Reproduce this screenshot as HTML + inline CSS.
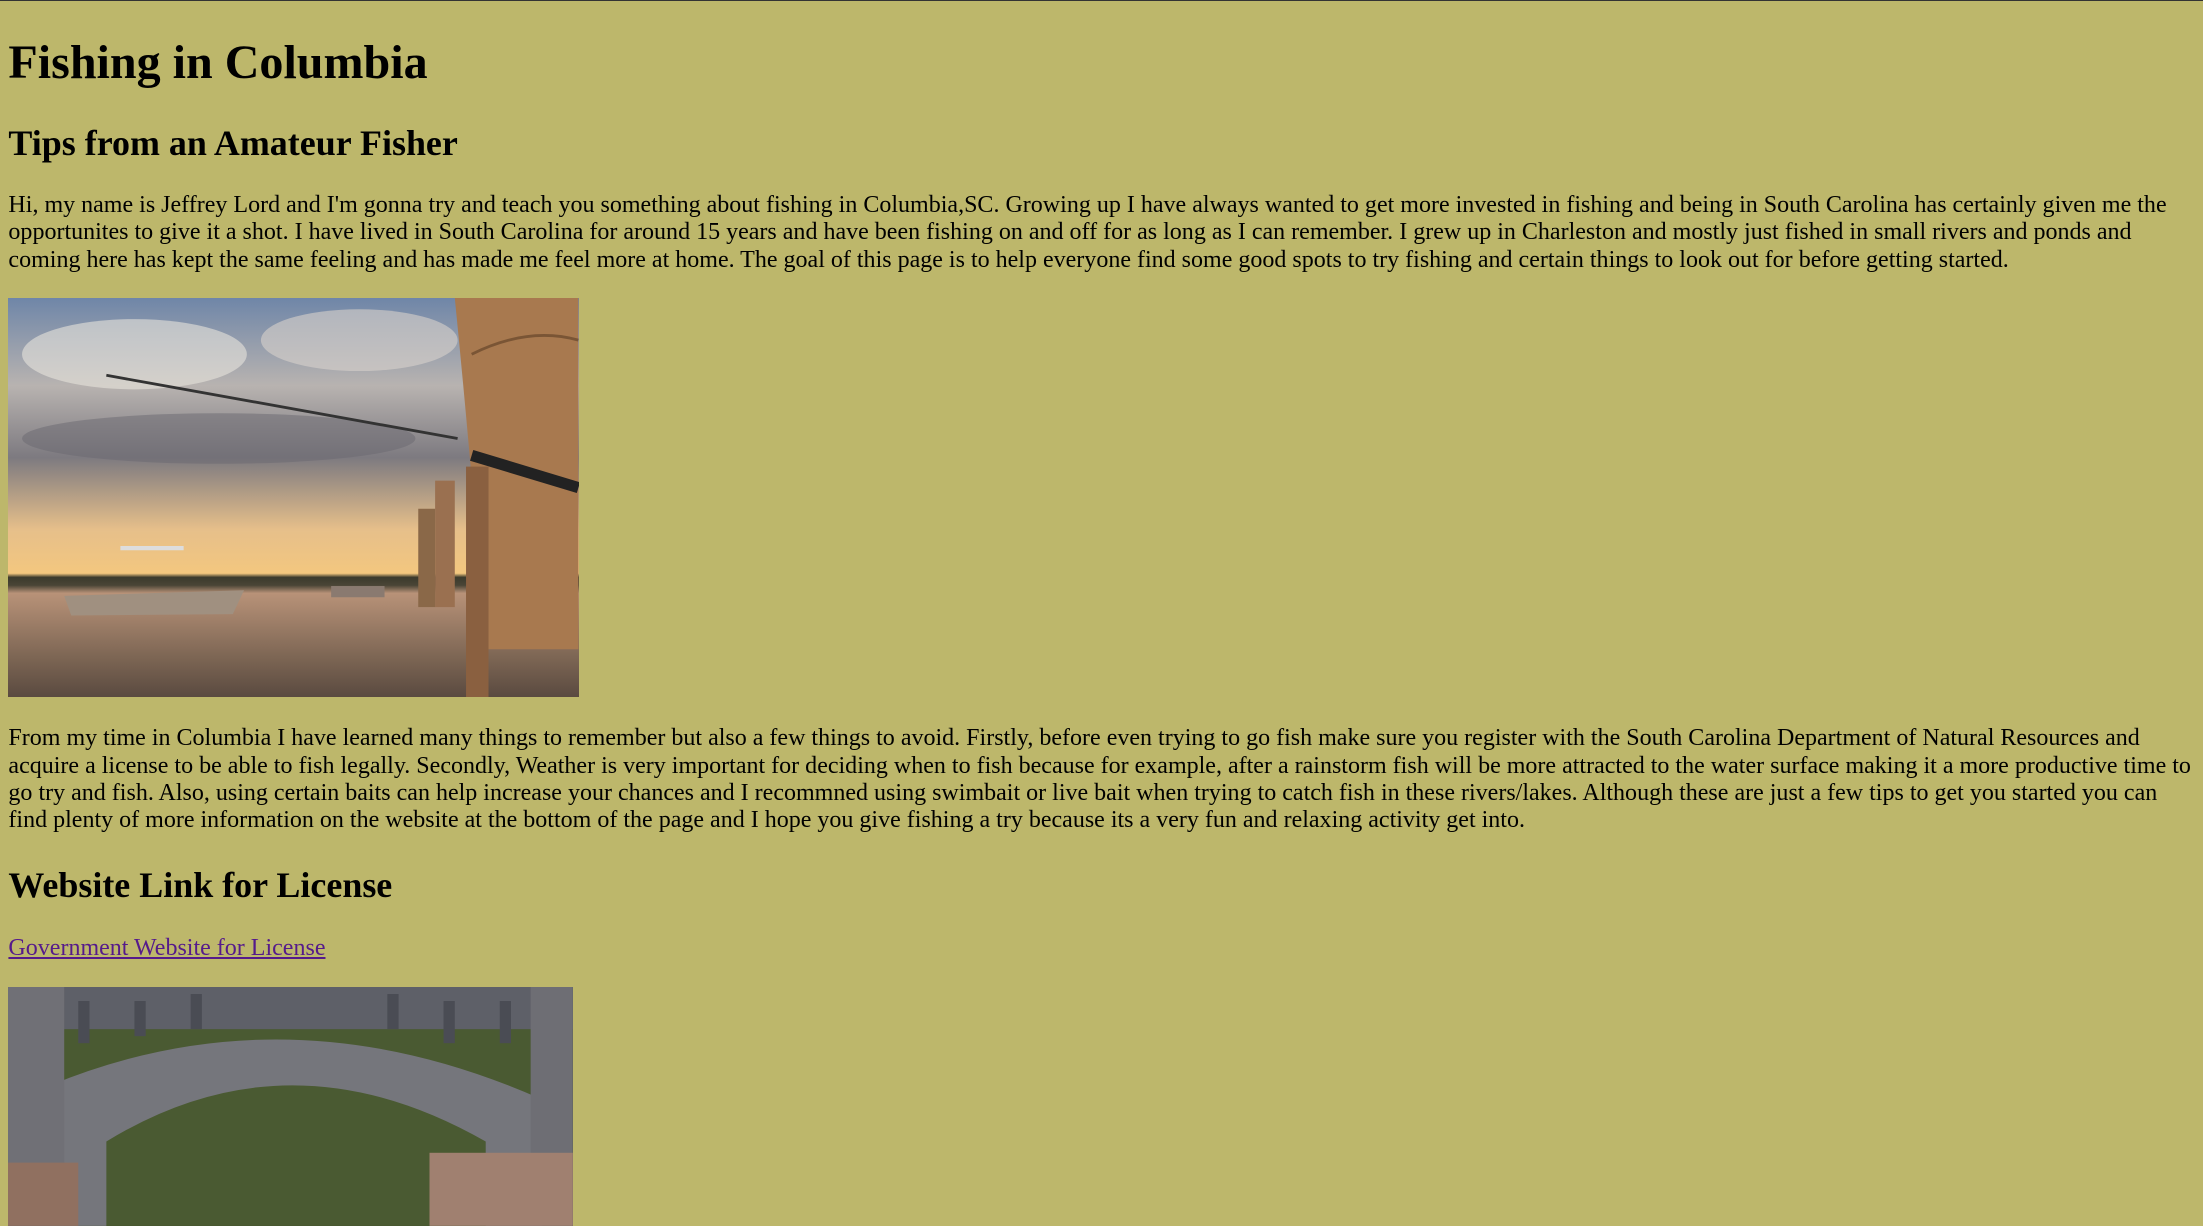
<!DOCTYPE html>
<html><head><meta charset="utf-8">
<style>
html{zoom:1.405;}
body{margin:0;background:#bdb76b;font-family:"Liberation Serif",serif;color:#000;border-top:1px solid #333;overflow:hidden;height:863px;}
.w{padding:0 6px 0 6px;}
h1{font-size:34.2px;line-height:39px;margin:25px 0 0;}
h2{font-size:25.6px;line-height:30px;margin:22px 0 0;}
p{font-size:17.1px;margin:20px 0 0;line-height:19.5px;}
a{color:#551a8b;}
.img1{width:406px;height:284px;margin-top:17px;position:relative;overflow:hidden;
background:linear-gradient(#6f86a8 0%,#b8b3b0 22%,#7d7a80 40%,#e6bf8a 58%,#f3c77f 69%,#3b3a2c 70%,#4a4536 72%,#b89278 74%,#7d6654 90%,#5a4a40 100%);}
.img2{width:402px;height:170px;margin-top:18px;position:relative;overflow:hidden;background:#3d4a2a;}
</style></head><body><div class="w">
<h1>Fishing in Columbia</h1>
<h2>Tips from an Amateur Fisher</h2>
<p>Hi, my name is Jeffrey Lord and I'm gonna try and teach you something about fishing in Columbia,SC. Growing up I have always wanted to get more invested in fishing and being in South Carolina has certainly given me the opportunites to give it a shot. I have lived in South Carolina for around 15 years and have been fishing on and off for as long as I can remember. I grew up in Charleston and mostly just fished in small rivers and ponds and coming here has kept the same feeling and has made me feel more at home. The goal of this page is to help everyone find some good spots to try fishing and certain things to look out for before getting started.</p>
<div class="img1">
<svg width="406" height="284" style="position:absolute;left:0;top:0">
<ellipse cx="90" cy="40" rx="80" ry="25" fill="#e8e4dc" opacity=".6"/>
<ellipse cx="250" cy="30" rx="70" ry="22" fill="#d8d2cc" opacity=".6"/>
<ellipse cx="150" cy="100" rx="140" ry="18" fill="#6a6870" opacity=".5"/>
<path d="M318 0 L406 0 L406 250 L340 250 Q330 120 318 0Z" fill="#a8794f"/>
<path d="M330 40 Q370 20 406 30" stroke="#7a5535" stroke-width="2" fill="none"/>
<rect x="326" y="120" width="16" height="220" fill="#8a6040"/>
<rect x="304" y="130" width="14" height="90" fill="#9a7050"/>
<rect x="292" y="150" width="12" height="70" fill="#8a6848"/>
<line x1="70" y1="55" x2="320" y2="100" stroke="#333" stroke-width="2"/>
<line x1="330" y1="112" x2="406" y2="135" stroke="#222" stroke-width="8"/>
<path d="M40 212 L168 208 L160 225 L45 226 Z" fill="#a09080"/>
<path d="M80 178 L125 178" stroke="#ddd" stroke-width="3"/>
<rect x="230" y="205" width="38" height="8" fill="#8a7a70"/>
</svg></div>
<p style="margin-top:20px">From my time in Columbia I have learned many things to remember but also a few things to avoid. Firstly, before even trying to go fish make sure you register with the South Carolina Department of Natural Resources and acquire a license to be able to fish legally. Secondly, Weather is very important for deciding when to fish because for example, after a rainstorm fish will be more attracted to the water surface making it a more productive time to go try and fish. Also, using certain baits can help increase your chances and I recommned using swimbait or live bait when trying to catch fish in these rivers/lakes. Although these are just a few tips to get you started you can find plenty of more information on the website at the bottom of the page and I hope you give fishing a try because its a very fun and relaxing activity get into.</p>
<h2 style="margin-top:21px">Website Link for License</h2>
<p><a href="#">Government Website for License</a></p>
<div class="img2">
<svg width="402" height="170" style="position:absolute;left:0;top:0">
<rect x="0" y="0" width="402" height="170" fill="#4a5a32"/>
<rect x="0" y="0" width="402" height="30" fill="#5e6068"/>
<path d="M30 170 L30 70 Q200 0 380 80 L380 170 L340 170 L340 110 Q200 30 70 110 L70 170Z" fill="#75767c"/>
<g fill="#4a4c54"><rect x="50" y="10" width="8" height="30"/><rect x="90" y="10" width="8" height="25"/><rect x="130" y="5" width="8" height="25"/><rect x="270" y="5" width="8" height="25"/><rect x="310" y="10" width="8" height="30"/><rect x="350" y="10" width="8" height="30"/></g>
<rect x="0" y="0" width="40" height="170" fill="#707076"/>
<rect x="372" y="0" width="30" height="170" fill="#6e6e74"/>
<rect x="300" y="118" width="102" height="52" fill="#a08070"/>
<rect x="0" y="125" width="50" height="45" fill="#907060"/>
</svg></div>
</div></body></html>
